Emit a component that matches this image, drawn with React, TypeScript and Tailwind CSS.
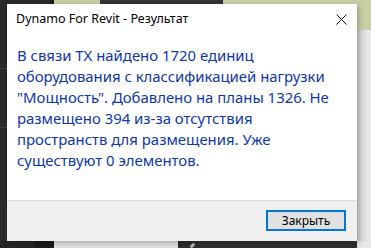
const lines = [
  "В связи ТХ найдено 1720 единиц",
  "оборудования с классификацией нагрузки",
  "\"Мощность\". Добавлено на планы 1326. Не",
  "размещено 394 из-за отсутствия",
  "пространств для размещения. Уже",
  "существуют 0 элементов.",
];

const App = () => {
  return (
    <div className="w-[371px] h-[248px] overflow-hidden bg-[#2b2b2b] flex flex-col font-['Noto_Sans',sans-serif]">
      {/* top strip of the desktop */}
      <div className="h-[4px] flex">
        <div className="w-[50px] bg-[#2b2b2b]" />
        <div className="w-[4px] bg-[#1f1f1f]" />
        <div className="w-[46px] bg-[#c5cfa2]" />
        <div className="w-[123px] bg-[#333333]" />
        <div className="flex-1 bg-[#c8d1a6]" />
      </div>

      <div className="h-[237px] flex">
        {/* left edge */}
        <div className="w-[7px] flex flex-col">
          <div className="h-[64px]" />
          <div className="h-px bg-[#3d3d3d]" />
          <div className="h-[58px]" />
          <div className="h-px bg-[#3d3d3d]" />
        </div>

        {/* dialog */}
        <div className="w-[350px] flex flex-col bg-white shadow-[2px_2px_6px_rgba(0,0,0,0.25)] z-10">
          <div className="h-[31px] flex items-center justify-between pl-[9px] pr-[10px]">
            <span className="text-[12.5px] text-black">Dynamo For Revit - Результат</span>
            <svg width="11" height="11" viewBox="0 0 11 11">
              <path d="M0.5 0.5 L10.5 10.5 M10.5 0.5 L0.5 10.5" stroke="#111" strokeWidth="1" />
            </svg>
          </div>
          <div className="flex-1 pl-[10px] pt-[10px] text-[14.9px] leading-[21px] text-[#0d36b0] whitespace-nowrap">
            {lines.map((l) => (
              <div key={l}>{l}</div>
            ))}
          </div>
          <div className="h-[41px] bg-[#f0f0f0] border-t border-[#dfdfdf] flex justify-end items-start pt-[9px] pr-[11px]">
            <button className="w-[80px] h-[21px] border-2 border-[#0078d7] bg-[#e1e1e1] text-[12px] text-black leading-none">
              Закрыть
            </button>
          </div>
        </div>

        {/* right edge */}
        <div className="flex-1 flex flex-col">
          <div className="h-[26px] bg-[#c8d1a6]" />
          <div className="flex-1 bg-gradient-to-r from-[#cfcfcf] to-[#eeeeee]" />
        </div>
      </div>

      {/* bottom strip */}
      <div className="flex-1 flex">
        <div className="w-[34px] bg-[#262626]" />
        <div className="w-[20px] bg-[#1c1c1c]" />
        <div className="w-[124px] bg-[#e4e4e4]" />
        <div className="w-[179px] bg-[#2f2f2f] pl-[13px] pt-[2px]">
          <div className="w-[3px] h-[5px] bg-[#bdbdbd] rotate-45" />
        </div>
        <div className="flex-1 bg-[#e6e6e6]" />
      </div>
    </div>
  );
};

export default App;
